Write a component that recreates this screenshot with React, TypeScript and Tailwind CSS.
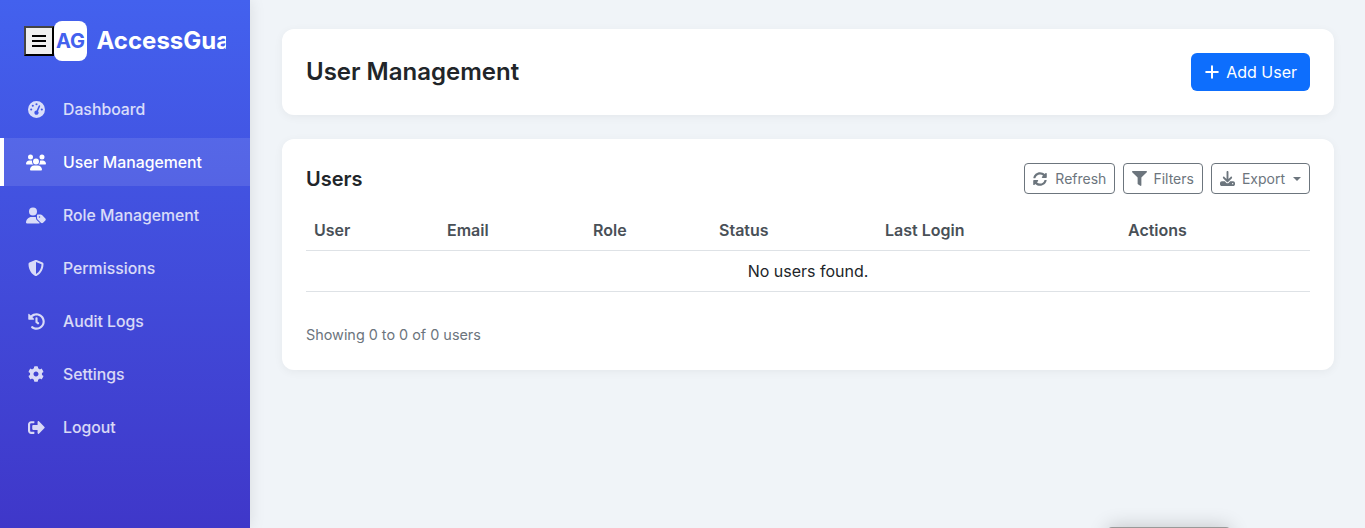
import { FaShieldAlt, FaHistory, FaCog, FaSignOutAlt, FaSyncAlt, FaFilter } from "react-icons/fa";
import { FaGaugeHigh, FaDownload, FaUsers, FaUserTag } from "react-icons/fa6";
import { Plus } from "lucide-react";

const nav = [
  { label: "Dashboard", Icon: FaGaugeHigh, size: 17 },
  { label: "User Management", Icon: FaUsers, size: 21 },
  { label: "Role Management", Icon: FaUserTag, size: 21 },
  { label: "Permissions", Icon: FaShieldAlt, size: 16 },
  { label: "Audit Logs", Icon: FaHistory, size: 17 },
  { label: "Settings", Icon: FaCog, size: 16 },
  { label: "Logout", Icon: FaSignOutAlt, size: 17 },
];

const cols = [
  ["User", "w-[133px]"],
  ["Email", "w-[146px]"],
  ["Role", "w-[126px]"],
  ["Status", "w-[166px]"],
  ["Last Login", "w-[243px]"],
  ["Actions", "w-[190px]"],
];

export default function App() {
  return (
    <div className="relative flex h-[528px] overflow-hidden bg-[#f0f4f8] font-['Inter',sans-serif]">
      <aside className="flex w-[250px] shrink-0 flex-col bg-gradient-to-b from-[#4361ee] to-[#3f37c9] shadow-[0_0_15px_rgba(0,0,0,0.1)]">
        <div className="flex h-[80px] items-start px-6 pt-[21px]">
          <div className="flex items-center overflow-hidden">
            <button className="flex h-[30px] w-[30px] shrink-0 items-center justify-center border-2 border-t-[#444] border-l-[#444] border-r-black border-b-black bg-[#efefef]">
              <svg width="16" height="14" viewBox="0 0 16 14" className="text-black">
                <path d="M1 2h14M1 7h14M1 12h14" stroke="currentColor" strokeWidth="2" />
              </svg>
            </button>
            <div className="flex h-10 w-[33px] shrink-0 items-center justify-center overflow-hidden rounded-lg bg-white text-[20px] font-bold text-[#4361ee]">AG</div>
            <span className="ml-[9.5px] whitespace-nowrap text-[24px] font-bold text-white">AccessGuard</span>
          </div>
        </div>
        <nav className="mt-[5px] flex flex-col gap-[5px]">
          {nav.map(({ label, Icon, size }) => {
            const active = label === "User Management";
            return (
              <div
                key={label}
                className={`flex h-12 items-center border-l-4 pl-[22px] text-[15.8px] font-medium ${active ? "border-white bg-white/10 text-white" : "border-transparent text-white/80"}`}
              >
                <span className="flex w-5 justify-center"><Icon size={size} /></span>
                <span className="ml-[17px] pt-px">{label}</span>
              </div>
            );
          })}
        </nav>
      </aside>
      <main className="flex-1 px-8 pt-[29px]">
        <section className="flex h-[86px] items-center justify-between rounded-xl bg-white px-6 shadow-[0_2px_10px_rgba(0,0,0,0.05)]">
          <h1 className="text-[24px] font-semibold text-[#212529]">User Management</h1>
          <button className="flex h-[38px] items-center gap-1 rounded-md bg-[#0d6efd] pl-[11px] pr-[13px] text-[16px] text-white">
            <Plus size={20} strokeWidth={2.4} />
            Add User
          </button>
        </section>
        <section className="mt-6 h-[231px] rounded-xl bg-white px-6 pt-6 shadow-[0_2px_10px_rgba(0,0,0,0.05)]">
          <div className="flex h-[31px] items-center justify-between">
            <h2 className="text-[20px] font-semibold text-[#212529]">Users</h2>
            <div className="flex gap-2">
              <button className="flex h-[31px] items-center gap-2 rounded border border-[#6c757d] px-2 text-[14px] text-[#6c757d]"><FaSyncAlt size={14} />Refresh</button>
              <button className="flex h-[31px] items-center gap-[6px] rounded border border-[#6c757d] px-2 text-[14px] text-[#6c757d]"><FaFilter size={15} />Filters</button>
              <button className="flex h-[31px] items-center rounded border border-[#6c757d] px-2 text-[14px] text-[#6c757d]">
                <FaDownload size={15} />
                <span className="ml-[7px]">Export</span>
                <span className="ml-[8px] h-0 w-0 border-x-4 border-t-4 border-x-transparent border-t-[#6c757d]" />
              </button>
            </div>
          </div>
          <table className="mt-[16px] w-full table-fixed border-collapse">
            <thead>
              <tr className="border-b border-[#dee2e6]">
                {cols.map(([c, w]) => (
                  <th key={c} className={`${w} h-10 px-2 text-left text-[16px] font-semibold text-[#495057]`}>{c}</th>
                ))}
              </tr>
            </thead>
            <tbody>
              <tr className="border-b border-[#dee2e6]">
                <td colSpan={6} className="h-[41px] text-center text-[16px] text-[#212529]">No users found.</td>
              </tr>
            </tbody>
          </table>
          <p className="mt-[32px] text-[14.4px] text-[#6c757d]">Showing 0 to 0 of 0 users</p>
        </section>
      </main>
      <div className="absolute left-[1108px] top-[527px] h-10 w-[122px] rounded-sm border-t border-[#999] bg-white shadow-[0_0_20px_rgba(0,0,0,0.2)]" />
    </div>
  );
}
